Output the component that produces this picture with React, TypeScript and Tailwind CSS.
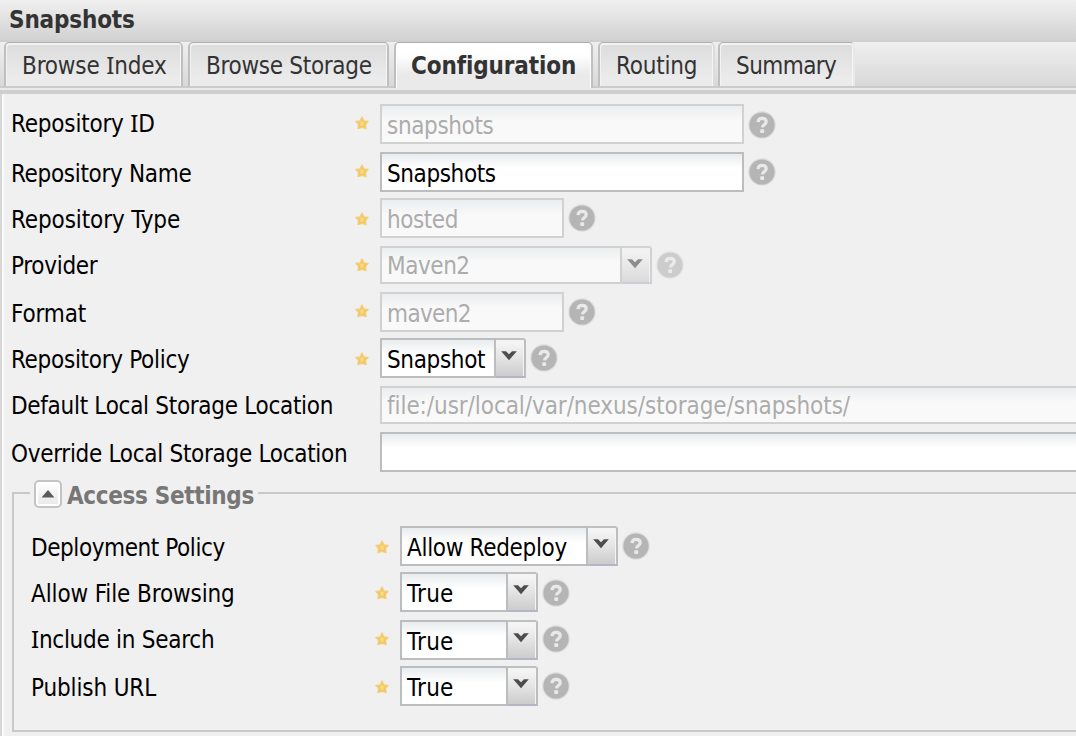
import React from "react";
import clsx from "clsx";

type Field = {
  label: React.ReactNode;
  labelClass: string;
  value?: string;
  valueClass?: string;
  row: string;
  box: string;
  star?: string;
  help?: string;
  select?: boolean;
  disabled?: boolean;
};

/* Capital I with serifs, as in Tahoma */
const I = () => <span className="font-['Noto_Sans'] leading-none">I</span>;

function Star({ className }: { className: string }) {
  return (
    <svg viewBox="0 0 14 14" className={clsx("size-[14px] shrink-0", className)}>
      <path
        d="M7 1.200 8.800 4.900 13 5.500 10.400 8.300 11 12.600 7 11.300 3 12.600 3.600 8.300 1 5.500 5.200 4.900Z"
        fill="#efc35a"
        stroke="#f3cf7c"
        strokeWidth="1.500"
        strokeLinejoin="round"
      />
      <path d="M7 4 7.900 6.200 10 6.600 8.500 8.100 8.800 10.300 7 9.500 5.200 10.300 5.500 8.100 4 6.600 6.100 6.200Z" fill="#fadb82" />
    </svg>
  );
}

function Help({ className, faded }: { className: string; faded?: boolean }) {
  return (
    <svg viewBox="0 0 28 28" className={clsx("ml-1 size-7 shrink-0", faded && "opacity-60", className)}>
      <circle cx="14" cy="14" r="13.7" fill="#dcdcdc" />
      <circle cx="14" cy="14" r="12.6" fill="#b5b5b5" />
      <path
        d="M10 11.200C10.200 8.700 11.800 7.400 14.100 7.400c2.500 0 4.100 1.200 4.100 3.300 0 2.700-3.500 2.800-3.800 5.700"
        fill="none"
        stroke="#e9e9e9"
        strokeWidth="3.200"
      />
      <rect x="12.200" y="18.200" width="4" height="3.700" rx=".8" fill="#e9e9e9" />
    </svg>
  );
}

function Row({ f }: { f: Field }) {
  return (
    <div className={clsx("flex items-start", f.row)}>
      <div className={clsx("w-[344px] shrink-0 whitespace-pre leading-7", f.labelClass)}>{f.label}</div>
      <div className="flex w-[25px] shrink-0">{f.star && <Star className={f.star} />}</div>
      <div className={clsx("flex shrink-0", f.box, f.disabled && "opacity-60")}>
        <div
          className={clsx(
            "min-w-0 flex-1 overflow-hidden whitespace-pre border-2 border-[#bcbdbe] bg-white bg-linear-to-b from-[#e9ecee] via-white via-40% to-white pl-[5px] leading-7",
            f.disabled ? "text-[#808080]" : "text-black",
            f.valueClass
          )}
        >
          {f.value}
        </div>
        {f.select && (
          <div className="flex w-[30px] shrink-0 justify-center rounded-tr-[3px] border-y-2 border-r-2 border-t-[#bfc0c1] border-r-[#bcbdbf] border-b-[#b4b6c8] bg-linear-to-b from-[#f4f4f4] from-10% via-[#e4e4e4] via-50% to-[#cccccc] shadow-[inset_-1px_0_0_#f4f4f4]">
            <svg viewBox="0 0 18 12" className="mt-[10px] mr-[3px] h-3 w-[18px] shrink-0">
              <path d="M1.200 1.300H6L9 4.300 12 1.300H16.800L9 10.300Z" fill="#4d4d4d" />
            </svg>
          </div>
        )}
      </div>
      {f.help && <Help className={f.help} faded={f.disabled && f.select} />}
    </div>
  );
}

const main: Field[] = [
  { label: <>Repository <I />D</>, labelClass: "pt-[6px] tracking-[-0.2px]", value: "snapshots", valueClass: "pt-1.5 tracking-[-0.37px]", row: "h-12", box: "h-10 w-[364px]", star: "mt-3", help: "mt-[7px]", disabled: true },
  { label: "Repository Name", labelClass: "pt-2 tracking-[-0.32px]", value: "Snapshots", valueClass: "pt-1.5 tracking-[-0.4px]", row: "h-[46px]", box: "h-10 w-[364px]", star: "mt-3", help: "mt-1.5" },
  { label: "Repository Type", labelClass: "pt-2 tracking-[-0.11px]", value: "hosted", valueClass: "pt-1.5 tracking-[-0.45px]", row: "h-12", box: "h-10 w-[184px]", star: "mt-3.5", help: "mt-1.5", disabled: true },
  { label: "Provider", labelClass: "pt-1.5 tracking-[-0.3px]", value: "Maven2", valueClass: "pt-1 tracking-[-0.45px]", row: "h-[46px]", box: "h-[38px] w-[272px]", star: "mt-3", help: "mt-[5px]", select: true, disabled: true },
  { label: "Format", labelClass: "pt-2 tracking-[-0.15px]", value: "maven2", valueClass: "pt-1.5 tracking-[-0.65px]", row: "h-[46px]", box: "h-10 w-[184px]", star: "mt-3", help: "mt-1.5", disabled: true },
  { label: "Repository Policy", labelClass: "pt-2 tracking-[-0.3px]", value: "Snapshot", valueClass: "pt-1.5 tracking-[-0.35px]", row: "h-12", box: "h-10 w-[146px]", star: "mt-3.5", help: "mt-1.5", select: true },
  { label: "Default Local Storage Location", labelClass: "pt-1.5 tracking-[-0.3px]", value: "file:/usr/local/var/nexus/storage/snapshots/", valueClass: "pt-1 tracking-[-0.07px]", row: "h-[46px]", box: "h-[38px] w-[720px]", disabled: true },
  { label: "Override Local Storage Location", labelClass: "pt-2 tracking-[-0.3px]", value: "", row: "h-10", box: "h-10 w-[720px]" },
];

const access: Field[] = [
  { label: "Deployment Policy", labelClass: "pt-2 tracking-[-0.42px]", value: "Allow Redeploy", valueClass: "pt-1.5 tracking-[-0.32px]", row: "h-[46px]", box: "h-10 w-[218px]", star: "mt-3.5", help: "mt-1.5", select: true },
  { label: "Allow File Browsing", labelClass: "pt-2 tracking-[-0.12px]", value: "True", valueClass: "pt-1.5 tracking-[0.3px]", row: "h-12", box: "h-10 w-[138px]", star: "mt-3.5", help: "mt-[7px]", select: true },
  { label: <><I />nclude in Search</>, labelClass: "pt-1.5 tracking-[-0.27px]", value: "True", valueClass: "pt-1.5 tracking-[0.3px]", row: "h-[46px]", box: "h-10 w-[138px]", star: "mt-3", help: "mt-[5px]", select: true },
  { label: "Publish URL", labelClass: "pt-2 tracking-[-0.14px]", value: "True", valueClass: "pt-1.5 tracking-[0.3px]", row: "h-10", box: "h-10 w-[138px]", star: "mt-3.5", help: "mt-1.5", select: true },
];

const tabs: { text: React.ReactNode; cls: string; active?: boolean }[] = [
  { text: <>Browse <I />ndex</>, cls: "w-[179px] mr-[5px] pl-[16px] tracking-[-0.17px]" },
  { text: "Browse Storage", cls: "w-[201px] mr-[5px] pl-[16px] tracking-[-0.3px]" },
  { text: "Configuration", cls: "w-[199px] mr-[5px] pl-[15px] tracking-[-0.12px]", active: true },
  { text: "Routing", cls: "w-[117px] mr-[3px] pl-[16px] tracking-[-0.2px] border-r-[#dcdcdc]" },
  { text: "Summary", cls: "w-[137px] pl-[16px] tracking-[-0.58px] border-r-[#e9e9e9]" },
];

export default function App() {
  return (
    <div className="flex h-[736px] w-[1076px] flex-col overflow-hidden bg-[#f0f0f0] font-['DejaVu_Sans_Condensed','DejaVu_Sans',sans-serif] text-[24px] text-black [font-stretch:condensed]">
      <header className="h-[42px] shrink-0 border-b-2 border-[#cfcfcf] bg-linear-to-b from-[#f0f0f0] to-[#d2d2d2] pt-[6px] pl-[9px] leading-7 font-bold tracking-[-0.17px] text-[#333]">
        Snapshots
      </header>
      <nav className="flex h-[46px] shrink-0 items-start border-b-2 border-[#cbcbcb] bg-linear-to-b from-[#efefef] to-[#d9d9d9] pl-1">
        {tabs.map((t, i) => (
          <div
            key={i}
            className={clsx(
              "shrink-0 whitespace-pre rounded-t-[5px] border-2 border-t border-b-0 border-[#bfbfbf] border-t-[#aeaeae] pt-[9px] leading-7 text-[#333]",
              t.active
                ? "h-[46px] bg-linear-to-b from-white from-25% to-[#eaeaea] to-70% font-bold shadow-[inset_1px_1px_0_#fff,inset_-1px_0_0_#fff]"
                : "h-[44px] bg-linear-to-b from-[#dcdcdc] to-[#ebebeb] to-80% shadow-[inset_1px_2px_0_#f3f3f3,inset_-1px_0_0_#f5f5f5]",
              t.cls
            )}
          >
            {t.text}
          </div>
        ))}
      </nav>
      <div className="h-1.5 shrink-0 border-b-4 border-[#cfcfcf] bg-[#eaeaea]" />
      <main className="flex flex-1 flex-col border-l-2 border-[#d6d6d6] pt-2.5 shadow-[inset_2px_0_0_#fafafa]">
        <div className="pl-[9px]">
          {main.map((f, i) => (
            <Row key={i} f={f} />
          ))}
        </div>
        <section className="mt-[6px] ml-[10px] flex h-[254px] w-[1100px] flex-col">
          <div className="flex h-[34px] shrink-0 items-start">
            <div className="mt-[14px] h-5 w-[18px] border-t-2 border-l-2 border-[#c9c9c9]" />
            <div className="mt-[2px] ml-1 flex size-7 items-center justify-center rounded-[5px] border-2 border-[#c4c4c4] bg-linear-to-b from-white via-[#f3f3f3] to-[#e9e9e9] shadow-[inset_0_0_0_2px_#fff]">
              <svg viewBox="0 0 14 8" className="-mt-px h-2 w-[14px]">
                <path d="M7 0 13.500 7.500H.5Z" fill="#5a5a5a" />
              </svg>
            </div>
            <h2 className="ml-[5px] pt-[4px] leading-7 font-bold tracking-[-0.34px] text-[#777]">Access Settings</h2>
            <div className="mt-[14px] ml-1 h-0.5 flex-1 bg-[#c9c9c9]" />
          </div>
          <div className="flex-1 border-b-2 border-l-2 border-[#c9c9c9] pt-3.5 pl-[17px]">
            {access.map((f, i) => (
              <Row key={i} f={f} />
            ))}
          </div>
        </section>
      </main>
    </div>
  );
}
